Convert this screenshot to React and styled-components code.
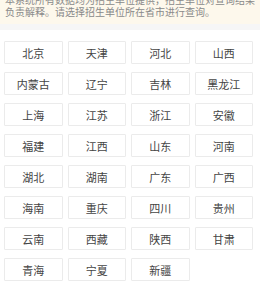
import React from "react";
import styled, { createGlobalStyle } from "styled-components";

const Global = createGlobalStyle`
  html, body { margin: 0; padding: 0; background: #fff; }
  body { font-family: "Noto Sans CJK SC", "Noto Sans", sans-serif; overflow: hidden; }
`;

const Page = styled.div`
  width: 260px;
  height: 294px;
  overflow: hidden;
  background: #f6f6f6;
`;

const Notice = styled.div`
  margin-top: -6px;
  padding: 0 5px 6px;
  background: #fdf8ec;
  color: #8a8a8a;
  font-size: 10px;
  line-height: 12px;
`;

const Panel = styled.div`
  margin-top: 6px;
  background: #fff;
  padding: 11px 7px 20px 4px;
  display: grid;
  grid-template-columns: repeat(4, 1fr);
  column-gap: 5px;
  row-gap: 8px;
`;

const Cell = styled.div`
  height: 23px;
  box-sizing: border-box;
  border: 1px solid #ebebeb;
  border-radius: 1px;
  display: flex;
  align-items: center;
  justify-content: center;
  font-size: 11px;
  color: #444;
`;

const provinces = [
  "北京", "天津", "河北", "山西",
  "内蒙古", "辽宁", "吉林", "黑龙江",
  "上海", "江苏", "浙江", "安徽",
  "福建", "江西", "山东", "河南",
  "湖北", "湖南", "广东", "广西",
  "海南", "重庆", "四川", "贵州",
  "云南", "西藏", "陕西", "甘肃",
  "青海", "宁夏", "新疆",
];

export default function App() {
  return (
    <Page>
      <Global />
      <Notice>
        本系统所有数据均为招生单位提供，招生单位对查询结果负责解释。请选择招生单位所在省市进行查询。
      </Notice>
      <Panel>
        {provinces.map((p) => (
          <Cell key={p}>{p}</Cell>
        ))}
      </Panel>
    </Page>
  );
}
